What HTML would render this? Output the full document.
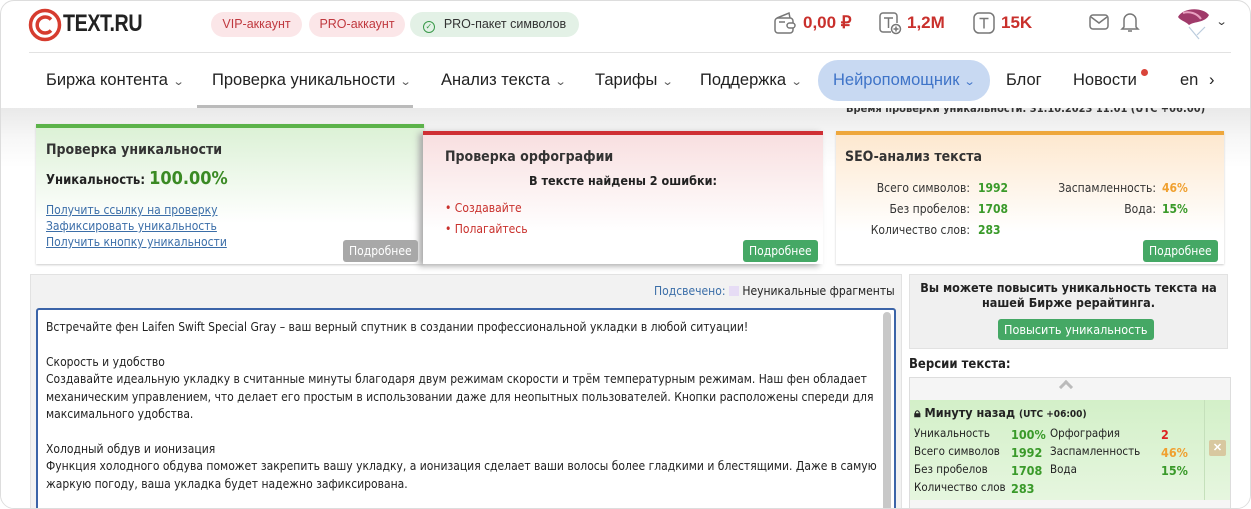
<!DOCTYPE html>
<html><head><meta charset="utf-8">
<style>
*{box-sizing:border-box;margin:0;padding:0}
body{width:1251px;height:509px;overflow:hidden;background:#fff;font-family:"Liberation Sans",sans-serif;position:relative}
.a{position:absolute;white-space:nowrap}
.frame{position:absolute;left:0;top:0;width:1251px;height:509px;border:1px solid #ddd;border-radius:14px;overflow:hidden;background:#fff}
.pill{position:absolute;top:11px;height:25px;border-radius:13px;font-size:12.5px;line-height:25px;text-align:center}
.nav{position:absolute;top:70px;font-size:16.5px;color:#222}
.chev{font-size:11px;color:#555;margin-left:6px;display:inline-block;transform:scaleX(1.3)}
.card{position:absolute;font-family:"DejaVu Sans Condensed","DejaVu Sans",sans-serif}
.h{font-weight:bold;font-size:14px;color:#333}
.btn{position:absolute;height:22px;line-height:22px;padding:0 6px;border-radius:3px;color:#fff;font-size:12px;font-family:"DejaVu Sans Condensed",sans-serif}
.s{font-size:12px;color:#333}
.g{color:#3a9a2a;font-weight:bold}
.o{color:#f0a030;font-weight:bold}
.r{color:#d22;font-weight:bold}
.tx{font-family:"DejaVu Sans Condensed",sans-serif;font-size:12px;color:#222}
</style></head><body>
<div class="frame">
<svg class="a" style="left:27px;top:7px" width="36" height="36" viewBox="0 0 36 36"><circle cx="17" cy="17" r="14.5" fill="none" stroke="#d63c2f" stroke-width="3.5"/><path d="M23 11.5 A8 8 0 1 0 23 22.5" fill="none" stroke="#d63c2f" stroke-width="3.5"/></svg>
<div class="a" style="left:62px;top:9px;font-size:24px;font-weight:bold;color:#222;transform:scaleX(0.82);transform-origin:left;letter-spacing:-0.5px">TEXT.RU</div>
<div class="pill" style="left:210px;width:91px;background:#fbe6e8;color:#c0393f">VIP-аккаунт</div>
<div class="pill" style="left:308px;width:96px;background:#fbe6e8;color:#c0393f">PRO-аккаунт</div>
<div class="pill" style="left:409px;width:169px;background:#e3f1e6;color:#333"><span style="color:#3a9a4a;border:1.3px solid #3a9a4a;border-radius:50%;display:inline-block;width:12px;height:12px;line-height:9px;font-size:8px;vertical-align:-1px;margin-right:9px">✓</span>PRO-пакет символов</div>
<svg class="a" style="left:771px;top:9px" width="26" height="26" viewBox="0 0 26 26" fill="none" stroke="#777" stroke-width="1.5"><path d="M5 8 L17 3 L18 8"/><rect x="3" y="8" width="18" height="15" rx="3"/><rect x="15" y="13" width="8" height="5" rx="2.5" fill="#fff"/><path d="M7 12h6"/></svg>
<div class="a" style="left:802px;top:12px;font-size:17px;color:#c9302c;font-weight:bold">0,00 ₽</div>
<svg class="a" style="left:876px;top:9px" width="26" height="26" viewBox="0 0 26 26" fill="none" stroke="#777" stroke-width="1.5"><path d="M14 22H6a3 3 0 0 1-3-3V6a3 3 0 0 1 3-3h11a3 3 0 0 1 3 3v7"/><path d="M7 8h9M11.5 8v10"/><circle cx="19" cy="19" r="4.5" fill="#fff"/><path d="M19 16.5v5M16.5 19h5"/></svg>
<div class="a" style="left:906px;top:12px;font-size:17px;color:#c9302c;font-weight:bold">1,2M</div>
<svg class="a" style="left:971px;top:10px" width="24" height="24" viewBox="0 0 24 24" fill="none" stroke="#777" stroke-width="1.5"><rect x="2" y="2" width="20" height="20" rx="5"/><path d="M7.5 7.5h9M12 7.5v10"/></svg>
<div class="a" style="left:1000px;top:12px;font-size:17px;color:#c9302c;font-weight:bold">15K</div>
<svg class="a" style="left:1087px;top:11px" width="22" height="20" viewBox="0 0 22 20" fill="none" stroke="#777" stroke-width="1.5"><rect x="2" y="3" width="18" height="14" rx="3"/><path d="M3 5l8 6 8-6"/></svg>
<svg class="a" style="left:1118px;top:9px" width="22" height="24" viewBox="0 0 22 24" fill="none" stroke="#777" stroke-width="1.5"><path d="M5 17V10a6 6 0 0 1 12 0v7l2 2H3z"/><path d="M9 21h4"/></svg>
<svg class="a" style="left:1174px;top:4px" width="38" height="38" viewBox="0 0 38 38"><path d="M3 12 C8 2 28 2 34 10 C30 18 20 16 14 20 C10 16 6 16 3 12Z" fill="#a03a6a"/><path d="M8 8 C14 6 22 8 26 14" stroke="#e8a0c0" stroke-width="2" fill="none"/><path d="M14 22 L24 34 M22 30 L30 22" stroke="#bcd" stroke-width="1.2"/></svg>
<div class="a" style="left:1216px;top:14px;font-size:11px;color:#333;transform:scaleX(1.3)">⌄</div>
<div class="a" style="left:28px;top:51px;width:1202px;height:1px;background:#e2e2e2"></div>
<div class="nav" style="left:45px">Биржа контента<span class="chev">⌄</span></div>
<div class="nav" style="left:211px">Проверка уникальности<span class="chev">⌄</span></div>
<div class="nav" style="left:440px">Анализ текста<span class="chev">⌄</span></div>
<div class="nav" style="left:594px">Тарифы<span class="chev">⌄</span></div>
<div class="nav" style="left:699px">Поддержка<span class="chev">⌄</span></div>
<div class="a" style="left:817px;top:59px;width:172px;height:41px;border-radius:20px;background:#c8d9f2"></div>
<div class="nav" style="left:832px;color:#3f74c8">Нейропомощник<span class="chev" style="color:#3f74c8">⌄</span></div>
<div class="nav" style="left:1005px">Блог</div>
<div class="nav" style="left:1072px">Новости</div>
<div class="a" style="left:1140px;top:68px;width:7px;height:7px;border-radius:50%;background:#d9443a"></div>
<div class="nav" style="left:1179px">en</div>
<div class="nav" style="left:1208px">›</div>
<div class="a" style="left:0;top:107px;width:1251px;height:420px;background:linear-gradient(#e9e9e9,#f7f7f7 30px,#fff 60px)"></div>
<div class="a" style="left:196px;top:104px;width:216px;height:3px;background:#bbb"></div>
<div class="a" style="left:845px;top:107px;height:6px;overflow:hidden;width:380px"><div style="margin-top:-6px;font-size:11px;font-weight:bold;color:#333;font-family:'DejaVu Sans Condensed',sans-serif;line-height:13px">Время проверки уникальности: 31.10.2023 11:01 (UTC +06:00)</div></div>
<div class="card" style="left:35px;top:123px;width:388px;height:140px;border-top:4px solid #5cb34a;background:linear-gradient(#dcf1d6,#fff 70%);box-shadow:0 1px 2px #ccc">
<div class="a h" style="left:10px;top:14px">Проверка уникальности</div>
<div class="a" style="left:10px;top:40px;font-size:13px;font-weight:bold;color:#222">Уникальность: <span style="color:#3a8a24;font-size:18px">100.00%</span></div>
<div class="a" style="left:10px;top:74px;font-size:12px;color:#3b6ea8;text-decoration:underline;line-height:16px">Получить ссылку на проверку<br>Зафиксировать уникальность<br>Получить кнопку уникальности</div>
<div class="btn" style="left:307px;top:112px;background:#a8a8a8">Подробнее</div>
</div>
<div class="card" style="left:422px;top:130px;width:400px;height:133px;border-top:4px solid #cf2f34;background:linear-gradient(#f8dfe0,#fff 75%);box-shadow:-4px 2px 6px #aaa">
<div class="a h" style="left:22px;top:14px">Проверка орфографии</div>
<div class="a" style="left:0;width:400px;text-align:center;top:38px;font-size:12.5px;font-weight:bold;color:#222">В тексте найдены 2 ошибки:</div>
<div class="a" style="left:22px;top:63px;font-size:12px;color:#c9302c;line-height:21px">• Создавайте<br>• Полагайтесь</div>
<div class="btn" style="left:320px;top:105px;background:#45a865">Подробнее</div>
</div>
<div class="card" style="left:835px;top:130px;width:388px;height:133px;border-top:4px solid #eea73c;background:linear-gradient(#fde8cf,#fff 75%);box-shadow:0 1px 2px #ccc">
<div class="a h" style="left:9px;top:14px">SEO-анализ текста</div>
<div class="a s" style="right:254px;top:43px;text-align:right;line-height:21px">Всего символов:<br>Без пробелов:<br>Количество слов:</div>
<div class="a s g" style="left:142px;top:43px;line-height:21px">1992<br>1708<br>283</div>
<div class="a s" style="right:68px;top:43px;text-align:right;line-height:21px">Заспамленность:<br>Вода:</div>
<div class="a s" style="left:326px;top:43px;line-height:21px"><span class="o">46%</span><br><span class="g">15%</span></div>
<div class="btn" style="left:307px;top:105px;background:#45a865">Подробнее</div>
</div>
<div class="a" style="left:29px;top:273px;width:872px;height:250px;background:#f2f2f2;border:1px solid #e2e2e2"></div>
<div class="a tx" style="left:653px;top:283px"><span style="color:#3b6ea8">Подсвечено:</span> <span style="display:inline-block;width:10px;height:10px;background:#e6dcf5;vertical-align:-1px"></span> Неуникальные фрагменты</div>
<div class="a" style="left:35px;top:307px;width:860px;height:220px;background:#fff;border:2px solid #3b64a8;border-radius:3px"></div>
<div class="a" style="left:882px;top:311px;width:8px;height:200px;background:#c8c8c8;border-radius:4px"></div>
<div class="a tx" style="left:45px;top:318px;line-height:17.4px">Встречайте фен Laifen Swift Special Gray – ваш верный спутник в создании профессиональной укладки в любой ситуации!<br><br>Скорость и удобство<br>Создавайте идеальную укладку в считанные минуты благодаря двум режимам скорости и трём температурным режимам. Наш фен обладает<br>механическим управлением, что делает его простым в использовании даже для неопытных пользователей. Кнопки расположены спереди для<br>максимального удобства.<br><br>Холодный обдув и ионизация<br>Функция холодного обдува поможет закрепить вашу укладку, а ионизация сделает ваши волосы более гладкими и блестящими. Даже в самую<br>жаркую погоду, ваша укладка будет надежно зафиксирована.</div>
<div class="a" style="left:908px;top:273px;width:319px;height:75px;background:#f0f0f0;border:1px solid #e2e2e2"></div>
<div class="a tx" style="left:908px;width:319px;text-align:center;top:279px;font-weight:bold;font-size:12.5px;line-height:15px;white-space:normal;padding:0 10px">Вы можете повысить уникальность текста на нашей Бирже рерайтинга.</div>
<div class="btn" style="left:997px;top:318px;height:21px;line-height:21px;background:#45a865;font-size:12.5px">Повысить уникальность</div>
<div class="a tx" style="left:908px;top:356px;font-weight:bold;font-size:13px">Версии текста:</div>
<div class="a" style="left:908px;top:376px;width:322px;height:140px;border:1px solid #ddd;background:#f5f5f5"></div>
<div class="a" style="left:1060px;top:381px;width:10px;height:10px;border-left:3px solid #bbb;border-top:3px solid #bbb;transform:rotate(45deg)"></div>
<div class="a" style="left:909px;top:399px;width:320px;height:100px;background:linear-gradient(#d3f0c8,#e6f6df)"></div>
<div class="a" style="left:1203px;top:399px;width:1px;height:100px;background:#c5e0bb"></div>
<div class="a" style="left:1208px;top:439px;width:17px;height:16px;background:#d8c8a0;border-radius:2px;color:#fff;font-size:11px;text-align:center;line-height:16px;font-weight:bold">✕</div>
<div class="a tx" style="left:913px;top:404px;font-weight:bold;font-size:12.5px">🔒︎ Минуту назад <span style="font-size:10px">(UTC +06:00)</span></div>
<div class="a tx" style="left:913px;top:423px;line-height:18px;font-size:11.5px">Уникальность<br>Всего символов<br>Без пробелов<br>Количество слов</div>
<div class="a tx" style="left:1010px;top:425px;line-height:18px;font-size:12.5px"><span class="g">100%</span><br><span class="g">1992</span><br><span class="g">1708</span><br><span class="g">283</span></div>
<div class="a tx" style="left:1049px;top:423px;line-height:18px;font-size:11.5px">Орфография<br>Заспамленность<br>Вода</div>
<div class="a tx" style="left:1160px;top:425px;line-height:18px;font-size:12.5px"><span class="r">2</span><br><span class="o">46%</span><br><span class="g">15%</span></div>
</div>
</body></html>
